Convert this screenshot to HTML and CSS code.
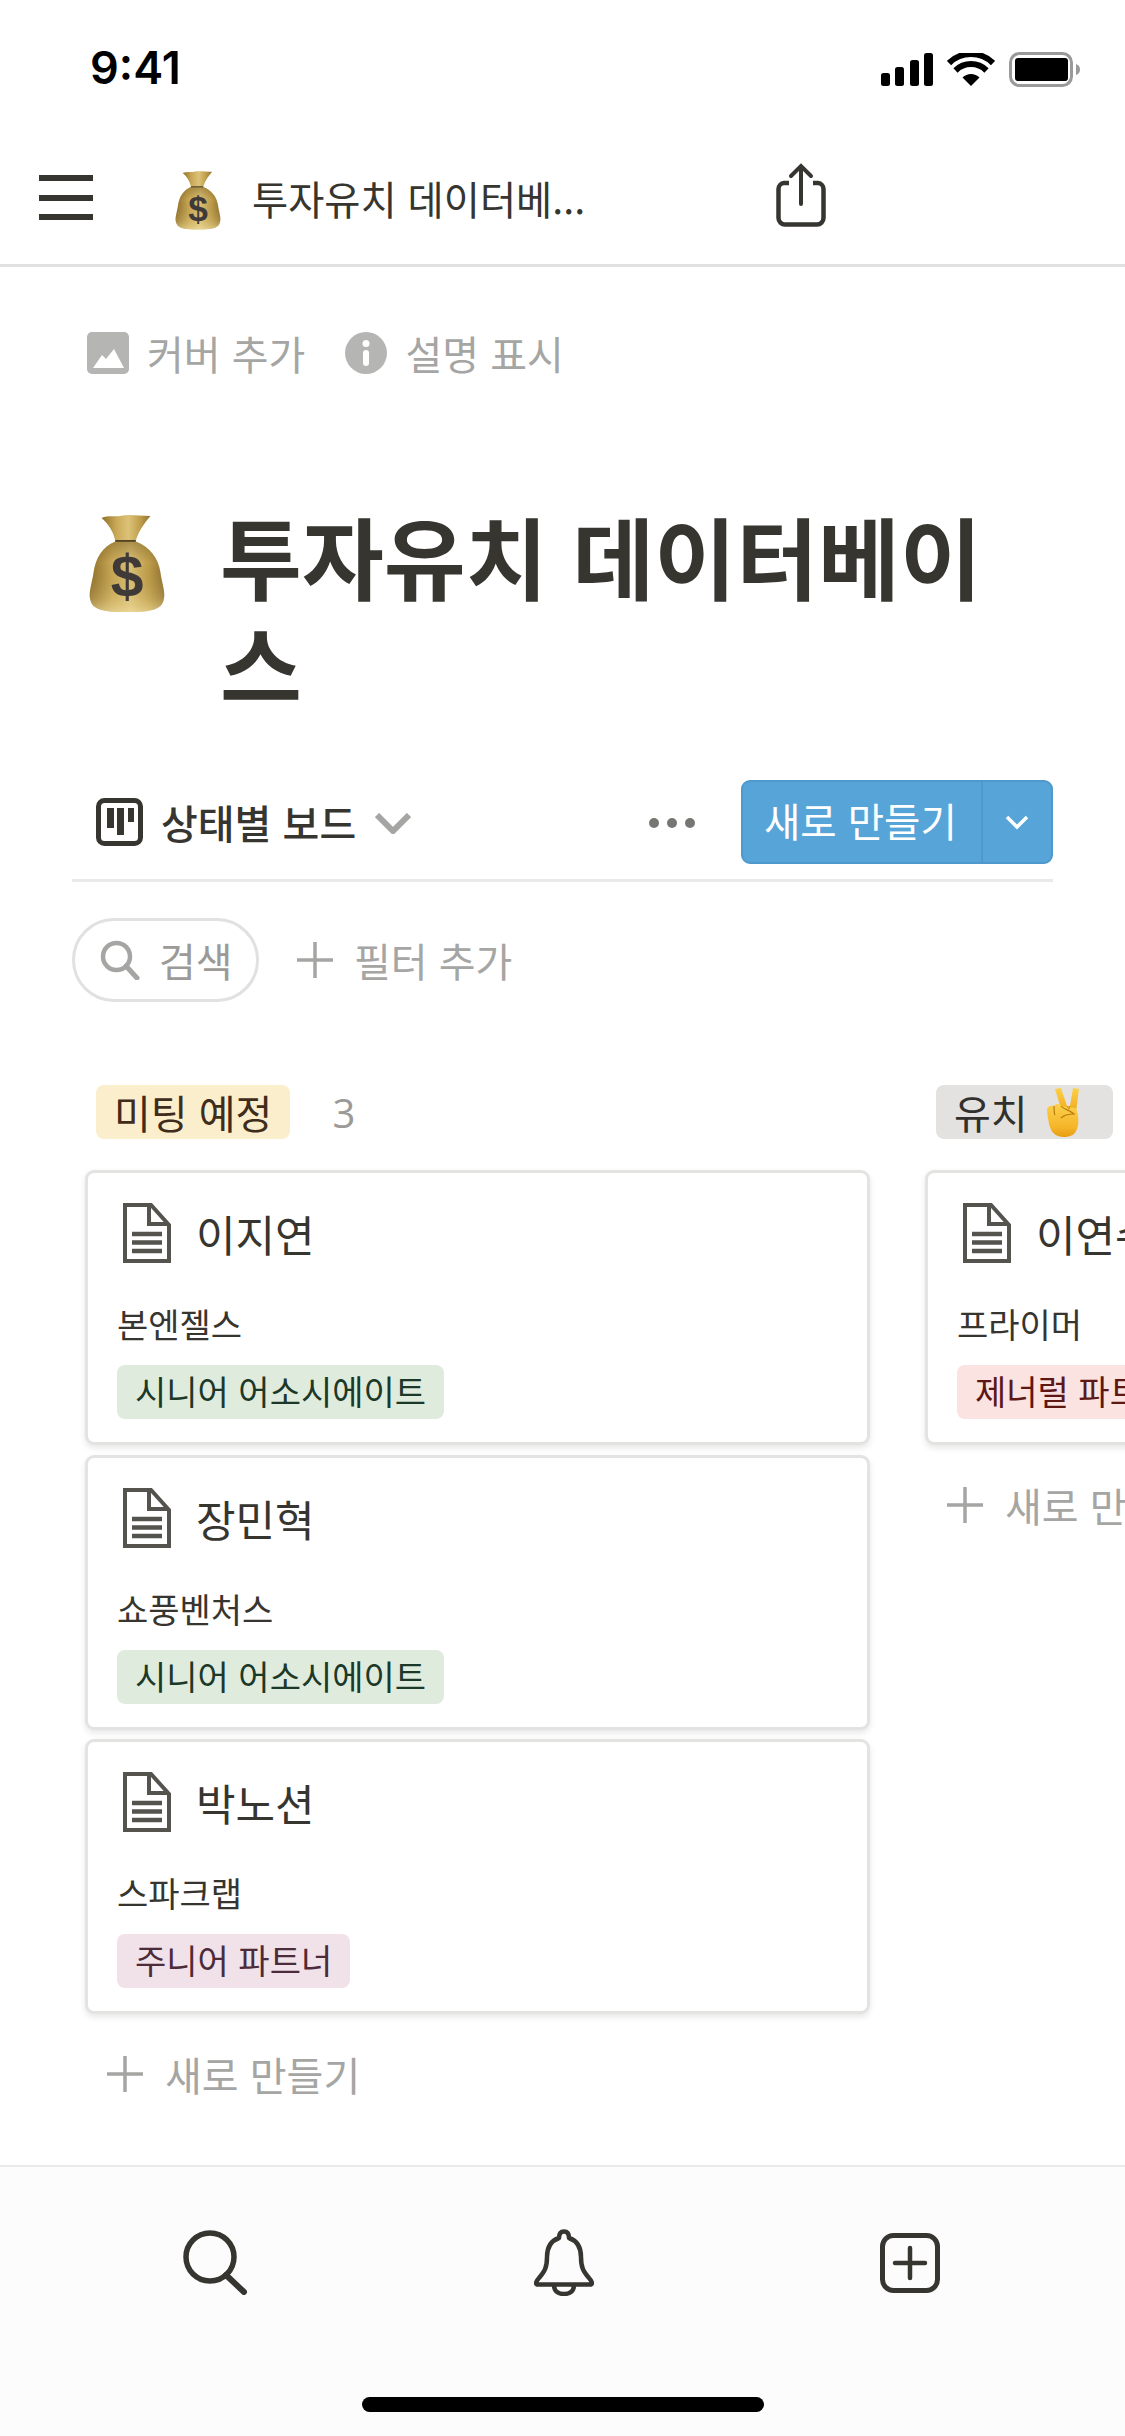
FILE: index.html
```html
<!DOCTYPE html>
<html lang="ko">
<head>
    <meta charset="UTF-8" />
    <title>투자유치 데이터베이스</title>
    <link rel="stylesheet" href="styles.css">
</head>
<body>
    <svg class="defs" width="0" height="0">
        <defs>
            <linearGradient id="bagBody" x1="0" y1="0" x2="1" y2="0">
                <stop offset="0" stop-color="#8d6f2a" />
                <stop offset="0.3" stop-color="#c9a957" />
                <stop offset="0.55" stop-color="#dcc278" />
                <stop offset="0.8" stop-color="#bd9c49" />
                <stop offset="1" stop-color="#8f7230" />
            </linearGradient>
            <linearGradient id="bagShade" x1="0" y1="0" x2="0" y2="1">
                <stop offset="0" stop-color="#6f5417" stop-opacity="0.45" />
                <stop offset="0.3" stop-color="#6f5417" stop-opacity="0" />
                <stop offset="0.8" stop-color="#e6cd86" stop-opacity="0.25" />
                <stop offset="1" stop-color="#f3e2a8" stop-opacity="0.6" />
            </linearGradient>
            <linearGradient id="handFill" x1="0" y1="0" x2="0" y2="1">
                <stop offset="0" stop-color="#fbd04a" />
                <stop offset="0.7" stop-color="#f5b52a" />
                <stop offset="1" stop-color="#e79d12" />
            </linearGradient>
            <symbol id="bag" viewBox="14 12 80 102">
                <path d="M28 17C35 14 42 16 47 15C56 13 66 15 78 15C72 22 66 30 63 40L42 40C40 30 34 22 28 17Z" fill="url(#bagBody)" />
                <path d="M42 41C29 46 22 58 20 72C18 86 14 94 17 102C20 112 35 113 54 113C73 113 88 112 91 102C94 94 90 86 88 72C86 58 77 46 63 41Z" fill="url(#bagBody)" />
                <path d="M42 41C29 46 22 58 20 72C18 86 14 94 17 102C20 112 35 113 54 113C73 113 88 112 91 102C94 94 90 86 88 72C86 58 77 46 63 41Z" fill="url(#bagShade)" />
                <path d="M42 40.5H63" stroke="#4a3a17" stroke-width="1.8" />
                <text x="54" y="98" text-anchor="middle" font-family="Liberation Sans, sans-serif" font-weight="700" font-size="60" fill="#3f3a38">$</text>
            </symbol>
            <symbol id="hand" viewBox="0 0 34 49">
                <path d="M9 1L15 0L21 18L24 18L27 0L33 1L30 24L16 24Z" fill="url(#handFill)" />
                <path d="M1 22C1 18 6 17 8 18C10 15 14 16 16 18L30 20C33 28 33 36 31 41C29 47 24 49 18 49C9 49 5 44 3 36C2 30 1 26 1 22Z" fill="url(#handFill)" />
                <path d="M8 18C8 22 8 25 9 27M15 18C17 21 24 22 28 26C24 26 18 27 15 30" fill="none" stroke="#b97a10" stroke-width="1.2" />
                <path d="M21 18L23 21L24 18" fill="none" stroke="#d1901a" stroke-width="1" />
            </symbol>
            <symbol id="doc" viewBox="0 0 48 60">
                <path d="M2 2H28L46 22V58H2Z M26 2V21H46" fill="none" stroke="#55534e" stroke-width="4" />
                <path d="M9 31H39M9 39.5H39M9 48H39" fill="none" stroke="#55534e" stroke-width="4.5" />
            </symbol>
            <symbol id="plus" viewBox="0 0 36 36">
                <path d="M18 0V36M0 18H36" fill="none" stroke="currentColor" stroke-width="3.5" stroke-linecap="round" />
            </symbol>
        </defs>
    </svg>

    <div class="phone">
        <div class="status-bar">
            <span class="time">9:41</span>
            <div class="status-icons">
                <svg class="signal" width="53" height="33" viewBox="0 0 53 33">
                    <rect x="0" y="20" width="9" height="13" rx="2.5" />
                    <rect x="14" y="14" width="9" height="19" rx="2.5" />
                    <rect x="29" y="7" width="9" height="26" rx="2.5" />
                    <rect x="43" y="0" width="9" height="33" rx="2.5" />
                </svg>
                <svg class="wifi" width="48" height="33" viewBox="0 0 48 33">
                    <path d="M24 33L15.5 24.5A12 12 0 0 1 32.5 24.5Z" />
                    <path d="M8.5 17.5A22 22 0 0 1 39.5 17.5" fill="none" stroke="#000" stroke-width="6" />
                    <path d="M2 10A31.5 31.5 0 0 1 46 10" fill="none" stroke="#000" stroke-width="6" />
                </svg>
                <svg class="battery" width="72" height="35" viewBox="0 0 72 35">
                    <rect x="1.5" y="1.5" width="61" height="32" rx="9" fill="none" stroke="#9a9a9a" stroke-width="3" />
                    <rect x="6" y="6" width="53" height="23" rx="3" fill="#000" />
                    <path d="M67 12C70 13 71 15 71 17.5C71 20 70 22 67 23Z" fill="#9a9a9a" />
                </svg>
            </div>
        </div>

        <header class="nav-bar">
            <div class="menu-icon"><i></i><i></i><i></i></div>
            <svg class="nav-emoji"><use href="#bag" /></svg>
            <span class="nav-title">투자유치 데이터베...</span>
            <svg class="share-icon" width="50" height="64" viewBox="0 0 50 64">
                <path d="M13 20H8A6 6 0 0 0 2.5 26V55A6.5 6.5 0 0 0 9 61.5H41A6.5 6.5 0 0 0 47.5 55V26A6 6 0 0 0 42 20H37" fill="none" stroke="#37352f" stroke-width="4.5" />
                <path d="M25 41V4M15 13L25 3L35 13" fill="none" stroke="#37352f" stroke-width="4" stroke-linecap="round" />
            </svg>
        </header>

        <main class="content">
            <div class="page-actions">
                <div class="page-action">
                    <svg width="42" height="42" viewBox="0 0 42 42">
                        <rect width="42" height="42" rx="5" fill="#b5b5b3" />
                        <path d="M6 36L15 23L19 27L27 17L37 36Z" fill="#fff" />
                    </svg>
                    <span>커버 추가</span>
                </div>
                <div class="page-action">
                    <svg width="42" height="42" viewBox="0 0 42 42">
                        <circle cx="21" cy="21" r="21" fill="#b5b5b3" />
                        <circle cx="21" cy="11.5" r="3.5" fill="#fff" />
                        <rect x="18" y="18" width="6" height="16" rx="3" fill="#fff" />
                    </svg>
                    <span>설명 표시</span>
                </div>
            </div>

            <div class="page-head">
                <svg class="head-emoji"><use href="#bag" /></svg>
                <h1>투자유치 데이터베이스</h1>
            </div>

            <div class="view-bar">
                <svg class="board-icon" width="47" height="48" viewBox="0 0 47 48">
                    <rect x="2.5" y="2.5" width="42" height="43" rx="6" fill="none" stroke="#37352f" stroke-width="5" />
                    <path d="M11 10H18V30H11ZM21 10H28V37H21ZM32 10H38V24H32Z" fill="#37352f" />
                </svg>
                <span class="view-name">상태별 보드</span>
                <svg class="view-caret" width="36" height="21" viewBox="0 0 36 21">
                    <path d="M2 2L18 18L34 2" fill="none" stroke="#a5a5a3" stroke-width="6" />
                </svg>
                <div class="more-dots"><i></i><i></i><i></i></div>
                <div class="new-btn">
                    <span class="new-btn-label">새로 만들기</span>
                    <span class="new-btn-caret">
                        <svg width="24" height="15" viewBox="0 0 24 15">
                            <path d="M2 2L12 12L22 2" fill="none" stroke="#fff" stroke-width="3.5" />
                        </svg>
                    </span>
                </div>
            </div>

            <div class="filter-bar">
                <div class="search-pill">
                    <svg width="40" height="40" viewBox="0 0 40 40">
                        <circle cx="16.5" cy="16.5" r="13.5" fill="none" stroke="#a5a5a3" stroke-width="4.5" />
                        <path d="M26 26L37 38" fill="none" stroke="#a5a5a3" stroke-width="5" stroke-linecap="round" />
                    </svg>
                    <span>검색</span>
                </div>
                <div class="add-filter">
                    <svg class="plus-icon"><use href="#plus" /></svg>
                    <span>필터 추가</span>
                </div>
            </div>

            <div class="board">
                <section class="column">
                    <div class="column-head">
                        <span class="group-tag tag-yellow">미팅 예정</span>
                        <span class="group-count">3</span>
                    </div>
                    <article class="card">
                        <div class="card-title"><svg class="doc-icon"><use href="#doc" /></svg><span>이지연</span></div>
                        <p class="card-sub">본엔젤스</p>
                        <span class="card-tag tag-green">시니어 어소시에이트</span>
                    </article>
                    <article class="card">
                        <div class="card-title"><svg class="doc-icon"><use href="#doc" /></svg><span>장민혁</span></div>
                        <p class="card-sub">쇼풍벤처스</p>
                        <span class="card-tag tag-green">시니어 어소시에이트</span>
                    </article>
                    <article class="card">
                        <div class="card-title"><svg class="doc-icon"><use href="#doc" /></svg><span>박노션</span></div>
                        <p class="card-sub">스파크랩</p>
                        <span class="card-tag tag-pink">주니어 파트너</span>
                    </article>
                    <div class="add-card">
                        <svg class="plus-icon"><use href="#plus" /></svg>
                        <span>새로 만들기</span>
                    </div>
                </section>
                <section class="column">
                    <div class="column-head">
                        <span class="group-tag tag-gray">유치 <svg class="tag-emoji"><use href="#hand" /></svg></span>
                    </div>
                    <article class="card">
                        <div class="card-title"><svg class="doc-icon"><use href="#doc" /></svg><span>이연수</span></div>
                        <p class="card-sub">프라이머</p>
                        <span class="card-tag tag-red">제너럴 파트너</span>
                    </article>
                    <div class="add-card">
                        <svg class="plus-icon"><use href="#plus" /></svg>
                        <span>새로 만들기</span>
                    </div>
                </section>
            </div>
        </main>

        <footer class="tab-bar">
            <div class="tab-icons">
                <svg width="64" height="65" viewBox="0 0 64 65">
                    <circle cx="27" cy="27" r="24" fill="none" stroke="#37352f" stroke-width="5.5" />
                    <path d="M43 45L61 62" fill="none" stroke="#37352f" stroke-width="6" stroke-linecap="round" />
                </svg>
                <svg width="62" height="67" viewBox="0 0 62 67">
                    <path d="M31 2.5C27 2.5 26 6 26 9C17 12 14 19 14 28C14 38 12 42 6 49C3 52 2.5 55 4 55.5H58C59.5 55 59 52 56 49C50 42 48 38 48 28C48 19 45 12 36 9C36 6 35 2.5 31 2.5Z" fill="none" stroke="#37352f" stroke-width="4.5" stroke-linejoin="round" />
                    <path d="M21 56C21 62 25 65 31 65C37 65 41 62 41 56" fill="none" stroke="#37352f" stroke-width="4.5" />
                </svg>
                <svg width="60" height="60" viewBox="0 0 60 60">
                    <rect x="2.5" y="2.5" width="55" height="55" rx="11" fill="none" stroke="#37352f" stroke-width="5" />
                    <path d="M30 15V45M15 30H45" fill="none" stroke="#37352f" stroke-width="4.5" stroke-linecap="round" />
                </svg>
            </div>
            <div class="home-indicator"></div>
        </footer>
    </div>
</body>
</html>
```

FILE: styles.css
```css
body {
    margin: 0;
    background: #fff;
    color: #37352f;
    font-family: "Noto Sans CJK KR", "Noto Sans", sans-serif;
}

.defs {
    position: absolute;
}

.phone {
    width: 1125px;
    height: 2436px;
    display: flex;
    flex-direction: column;
    overflow: hidden;
}

/* status bar */
.status-bar {
    height: 132px;
    flex: none;
    box-sizing: border-box;
    padding: 44px 44px 0 90px;
    display: flex;
    justify-content: space-between;
    align-items: flex-start;
}

.time {
    font-family: Inter, "Liberation Sans", sans-serif;
    font-size: 45px;
    font-weight: 600;
    line-height: 48px;
    color: #000;
}

.status-icons {
    display: flex;
    align-items: center;
    margin-top: 8px;
}

.wifi {
    margin-left: 13px;
}

.battery {
    margin-left: 14px;
}

/* top nav */
.nav-bar {
    height: 135px;
    flex: none;
    box-sizing: border-box;
    border-bottom: 3px solid #e1e1e1;
    padding: 0 0 1px 39px;
    display: flex;
    align-items: center;
}

.menu-icon {
    width: 54px;
    display: flex;
    flex-direction: column;
    gap: 13.5px;
}

.menu-icon i {
    display: block;
    height: 6px;
    background: #37352f;
}

.nav-emoji {
    width: 48px;
    height: 60px;
    margin-left: 81px;
    margin-top: 5px;
}

.nav-title {
    margin-left: 30px;
    font-size: 39.3px;
    width: 340px;
    white-space: nowrap;
}

.share-icon {
    margin-left: 184px;
    margin-top: -6px;
}

/* page header */
.content {
    flex: 1;
    min-height: 0;
    overflow: hidden;
}

.page-actions {
    display: flex;
    gap: 40px;
    padding: 65px 0 0 87px;
    color: #a5a5a3;
    font-size: 40px;
}

.page-action {
    display: flex;
    align-items: center;
    gap: 18px;
    height: 42px;
}

.page-head {
    display: flex;
    padding: 127px 90px 0 87px;
}

.head-emoji {
    width: 80px;
    height: 100px;
    flex: none;
    margin-top: 12px;
}

h1 {
    margin: 0 0 0 53px;
    font-size: 89px;
    font-weight: 700;
    line-height: 108px;
}

/* view toolbar */
.view-bar {
    margin: 63px 72px 0;
    height: 99px;
    border-bottom: 3px solid #e9e9e8;
    display: flex;
    align-items: flex-start;
}

.board-icon {
    margin: 18px 0 0 24px;
}

.view-name {
    margin-left: 18px;
    font-size: 40px;
    font-weight: 500;
    line-height: 84px;
}

.view-caret {
    margin: 33px 0 0 19px;
}

.more-dots {
    display: flex;
    gap: 8px;
    margin: 38px 0 0 auto;
}

.more-dots i {
    display: block;
    width: 10px;
    height: 10px;
    border-radius: 50%;
    background: #777673;
}

.new-btn {
    margin-left: 46px;
    width: 312px;
    height: 84px;
    box-sizing: border-box;
    border: 2px solid #4f98cb;
    border-radius: 9px;
    background: #57a5d8;
    color: #fff;
    display: flex;
    font-size: 39.5px;
    line-height: 76px;
}

.new-btn-label {
    width: 240px;
    box-sizing: border-box;
    padding-left: 21px;
    border-right: 2px solid #4f98cb;
    white-space: nowrap;
}

.new-btn-caret {
    flex: 1;
    display: flex;
    align-items: center;
    justify-content: center;
}

/* search and filter */
.filter-bar {
    margin: 36px 72px 0;
    display: flex;
    align-items: center;
    color: #a5a5a3;
    font-size: 40px;
}

.search-pill {
    width: 187px;
    height: 84px;
    box-sizing: border-box;
    border: 3px solid #e1e1e1;
    border-radius: 42px;
    padding-left: 25px;
    display: flex;
    align-items: center;
    gap: 19px;
    color: #9b9a97;
}

.add-filter {
    margin-left: 38px;
    display: flex;
    align-items: center;
    gap: 21px;
}

.plus-icon {
    width: 36px;
    height: 36px;
    color: #a5a5a3;
    flex: none;
}

/* board */
.board {
    display: flex;
    gap: 55px;
    padding: 83px 0 0 85px;
}

.column {
    width: 785px;
    flex: none;
}

.column-head {
    height: 54px;
    padding-left: 11px;
    margin-bottom: 31px;
    display: flex;
    align-items: center;
}

.group-tag {
    height: 54px;
    box-sizing: border-box;
    padding: 0 18px;
    border-radius: 8px;
    font-size: 40px;
    line-height: 54px;
    display: flex;
    align-items: center;
    gap: 18px;
    white-space: nowrap;
}

.tag-yellow {
    background: #fbeecc;
    color: #402c1b;
}

.tag-gray {
    background: #e3e2e0;
    color: #32302c;
    padding-right: 33px;
}

.tag-emoji {
    width: 34px;
    height: 49px;
}

.group-count {
    margin-left: 42px;
    font-family: "Open Sans", sans-serif;
    font-size: 40px;
    color: #9b9a97;
}

.card {
    height: 275px;
    box-sizing: border-box;
    margin-bottom: 9.5px;
    padding: 29px 29px 0;
    background: #fff;
    border: 3px solid #e3e3e2;
    border-radius: 9px;
    box-shadow: 0 3px 6px rgba(15, 15, 15, 0.1);
}

.card-title {
    height: 62px;
    display: flex;
    align-items: center;
    gap: 25px;
    padding-left: 6px;
    font-size: 43px;
    white-space: nowrap;
}

.doc-icon {
    width: 48px;
    height: 60px;
    flex: none;
}

.card-sub {
    margin: 38px 0 0;
    font-size: 34px;
    line-height: 44px;
    white-space: nowrap;
}

.card-tag {
    display: inline-block;
    margin-top: 19px;
    height: 54px;
    padding: 0 18px;
    border-radius: 8px;
    font-size: 34px;
    line-height: 52px;
    white-space: nowrap;
}

.tag-green {
    background: #dfecdd;
    color: #1c3829;
}

.tag-pink {
    background: #f1e1e8;
    color: #4c2b3a;
}

.tag-red {
    background: #fae3e1;
    color: #5d1715;
}

.add-card {
    display: flex;
    align-items: center;
    gap: 22px;
    padding: 19px 0 0 22px;
    font-size: 40px;
    line-height: 62px;
    color: #a5a5a3;
    white-space: nowrap;
}

/* bottom tabs */
.tab-bar {
    height: 271px;
    flex: none;
    box-sizing: border-box;
    border-top: 2px solid #e9e9e8;
    background: #fcfcfc;
    padding-top: 62px;
}

.tab-icons {
    height: 67px;
    padding: 0 185px 0 183px;
    display: flex;
    justify-content: space-between;
    align-items: center;
}

.home-indicator {
    width: 402px;
    height: 15px;
    margin: 101px auto 0;
    border-radius: 8px;
    background: #000;
}
```
